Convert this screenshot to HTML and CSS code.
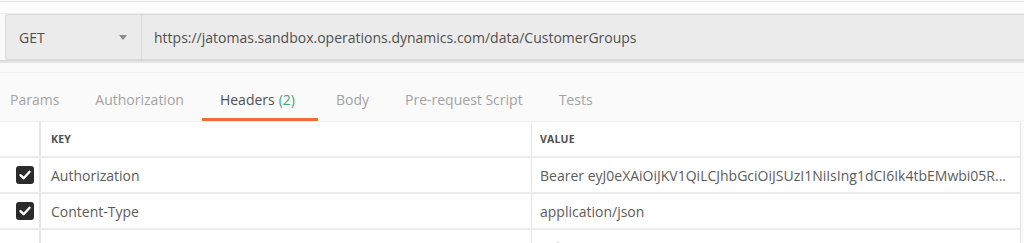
FILE: index.html
```html
<!DOCTYPE html>
<html>
<head>
<meta charset="utf-8">
<link rel="stylesheet" href="styles.css">
</head>
<body>
<div class="topstrip"></div>
<div class="reqbar">
  <div class="method">
    <span class="method-name">GET</span>
    <span class="caret"></span>
  </div>
  <div class="url">https://jatomas.sandbox.operations.dynamics.com/data/CustomerGroups</div>
</div>
<div class="shadow"></div>
<div class="tabs">
  <div class="tab first">Params</div>
  <div class="tab">Authorization</div>
  <div class="tab active">Headers <span class="count">(2)</span></div>
  <div class="tab">Body</div>
  <div class="tab">Pre-request Script</div>
  <div class="tab">Tests</div>
</div>
<div class="table">
  <div class="row head">
    <div class="cell chk"></div>
    <div class="cell key">KEY</div>
    <div class="cell val">VALUE</div>
  </div>
  <div class="row">
    <div class="cell chk"><span class="box"><svg viewBox="0 0 18 18" width="18" height="18"><path d="M4.5 9.2 L7.6 12.2 L13.6 5.8" fill="none" stroke="#fff" stroke-width="2.4" stroke-linecap="round" stroke-linejoin="round"/></svg></span></div>
    <div class="cell key">Authorization</div>
    <div class="cell val">Bearer eyJ0eXAiOiJKV1QiLCJhbGciOiJSUzI1NiIsIng1dCI6Ik4tbEMwbi05R...</div>
  </div>
  <div class="row">
    <div class="cell chk"><span class="box"><svg viewBox="0 0 18 18" width="18" height="18"><path d="M4.5 9.2 L7.6 12.2 L13.6 5.8" fill="none" stroke="#fff" stroke-width="2.4" stroke-linecap="round" stroke-linejoin="round"/></svg></span></div>
    <div class="cell key">Content-Type</div>
    <div class="cell val">application/json</div>
  </div>
  <div class="row">
    <div class="cell chk"></div>
    <div class="cell key ph">Key</div>
    <div class="cell val ph">Value</div>
  </div>
</div>
</body>
</html>
```

FILE: styles.css
```css
* { box-sizing: border-box; }
html, body {
  margin: 0;
  padding: 0;
  background: #fafafa;
  font-family: "Open Sans", "Noto Sans", sans-serif;
  overflow: hidden;
  height: 243px;
}
.topstrip {
  height: 13px;
  border-top: 1px solid #e6e6e6;
  border-bottom: 1px solid #ececec;
  margin-top: 1px;
  background: #fcfcfc;
}
.reqbar {
  display: flex;
  height: 46px;
  margin: 0 0 0 5px;
  background: #ebebeb;
  border: 1px solid #d9d9d9;
  border-right: none;
  border-radius: 3px 0 0 3px;
}
.method {
  width: 136px;
  display: flex;
  align-items: center;
  justify-content: space-between;
  padding: 0 14px 0 13px;
  border-right: 1px solid #dadada;
}
.method-name {
  font-size: 14px;
  color: #4f4f4f;
}
.caret {
  width: 0;
  height: 0;
  border-left: 4px solid transparent;
  border-right: 4px solid transparent;
  border-top: 5px solid #8a8a8a;
}
.url {
  display: flex;
  align-items: center;
  padding-left: 12px;
  font-size: 14px;
  color: #505050;
  white-space: nowrap;
}
.shadow {
  height: 3px;
  background: #e4e4e4;
  border-top: 1px solid #d6d6d6;
}
.tabs {
  display: flex;
  height: 49px;
  margin-top: 9px;
  border-top: 1px solid #eeeeee;
  align-items: stretch;
}
.tab {
  padding: 0 18px;
  font-size: 14px;
  color: #a3a3a3;
  display: flex;
  align-items: center;
  padding-top: 8px;
  border-bottom: 3px solid transparent;
}
.tab.first { padding-left: 10px; }
.tab.active {
  color: #505050;
  border-bottom-color: #f26b3a;
  padding-right: 23px;
}
.count { color: #3fa77a; margin-left: 4px; }
.table {
  background: #fff;
  width: 1021px;
  border-right: 1px solid #e3e3e3;
  border-top: 1px solid #f0f0f0;
}
.row {
  display: flex;
  height: 36px;
  border-bottom: 2px solid #ececec;
}
.cell {
  display: flex;
  align-items: center;
  font-size: 14px;
  color: #5c5c5c;
  white-space: nowrap;
  overflow: hidden;
}
.chk {
  width: 41px;
  border-right: 2px solid #e6e6e6;
  justify-content: flex-end;
  padding-right: 5px;
}
.key {
  width: 491px;
  padding-left: 10px;
  border-right: 1px solid #e6e6e6;
}
.val {
  flex: 1;
  padding-left: 8px;
}
.head .cell {
  font-size: 10.5px;
  font-weight: 700;
  color: #505050;
  letter-spacing: 0.2px;
}
.ph { color: #b8b8b8; }
.box {
  width: 18px;
  height: 18px;
  background: #2b2b2b;
  border-radius: 3px;
  display: block;
}
.box svg { display: block; }
```
